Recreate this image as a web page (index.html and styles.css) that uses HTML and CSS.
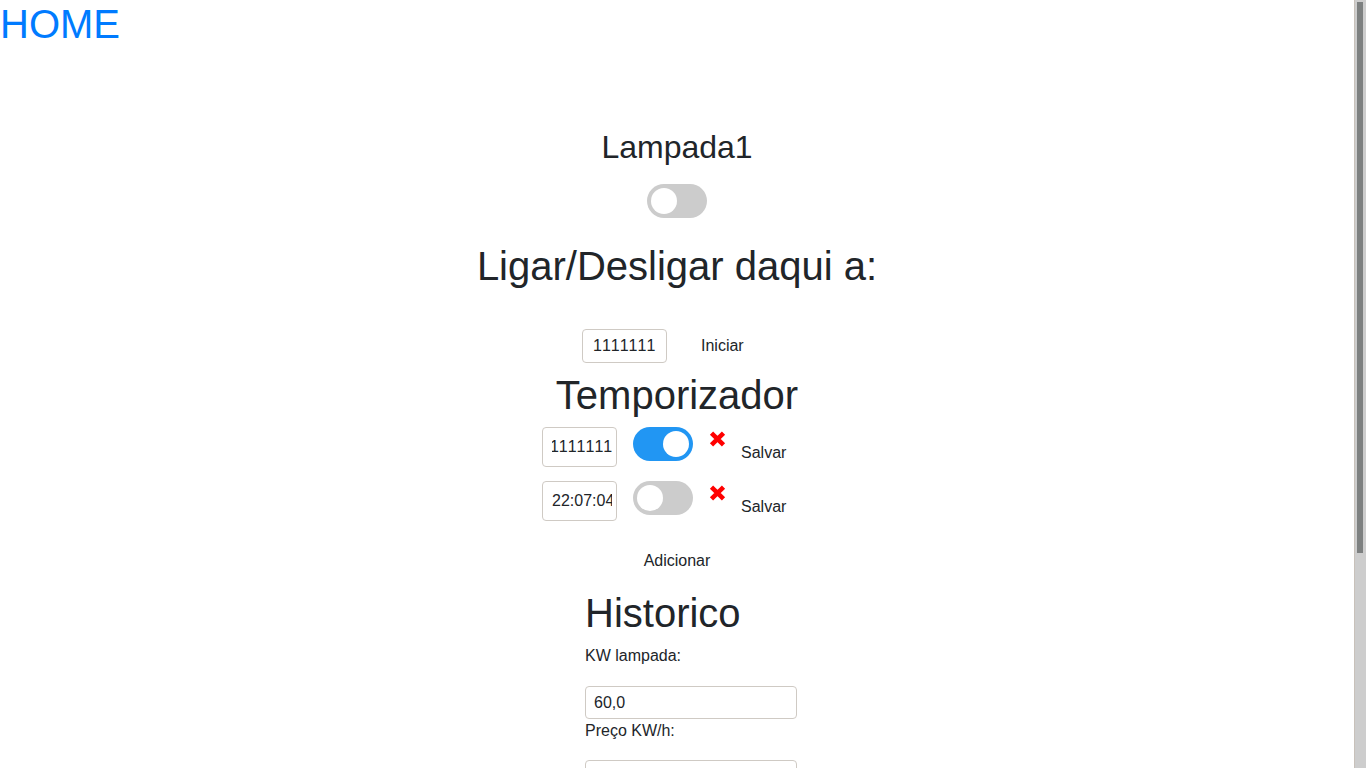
FILE: index.html
```html
<!DOCTYPE html>
<html lang="pt">
<head>
<meta charset="utf-8">
<title>Lampada1</title>
<link rel="stylesheet" href="styles.css">
</head>
<body>
<a class="home" href="#">HOME</a>
<main class="page">
  <h2 class="device-name">Lampada1</h2>
  <div class="main-switch">
    <label class="switch"><input type="checkbox"><span class="slider"></span></label>
  </div>
  <h1 class="title title-ligar">Ligar/Desligar daqui a:</h1>
  <div class="countdown-row">
    <input class="field field-count" type="text" value="1111111">
    <button class="link-btn start-btn" type="button">Iniciar</button>
  </div>
  <h1 class="title title-timer">Temporizador</h1>
  <div class="timer-list">
    <div class="timer-row">
      <input class="field field-time scroll-end" type="text" value="11111111">
      <label class="switch switch-timer"><input type="checkbox" checked><span class="slider"></span></label>
      <svg class="remove-icon" width="17" height="16" viewBox="0 0 17 16" aria-hidden="true">
        <path d="M2.5 2.2 L14.5 13.8 M14.5 2.2 L2.5 13.8" stroke="#ff0000" stroke-width="4.6" stroke-linecap="butt" fill="none"/>
      </svg>
      <button class="link-btn save-btn" type="button">Salvar</button>
    </div>
    <div class="timer-row">
      <input class="field field-time" type="text" value="22:07:04">
      <label class="switch switch-timer"><input type="checkbox"><span class="slider"></span></label>
      <svg class="remove-icon" width="17" height="16" viewBox="0 0 17 16" aria-hidden="true">
        <path d="M2.5 2.2 L14.5 13.8 M14.5 2.2 L2.5 13.8" stroke="#ff0000" stroke-width="4.6" stroke-linecap="butt" fill="none"/>
      </svg>
      <button class="link-btn save-btn" type="button">Salvar</button>
    </div>
  </div>
  <div class="add-row">
    <button class="link-btn add-btn" type="button">Adicionar</button>
  </div>
  <section class="history">
    <h1 class="title history-title">Historico</h1>
    <label class="field-label label-first" for="kw">KW lampada:</label>
    <input class="field field-wide field-kw" id="kw" type="text" value="60,0">
    <label class="field-label" for="preco">Preço KW/h:</label>
    <input class="field field-wide field-preco" id="preco" type="text" value="">
  </section>
</main>
<script src="script.js"></script>
</body>
</html>
```

FILE: styles.css
```css
html, body {
  margin: 0;
  padding: 0;
}

/* page canvas, with the scrollbar strip of the original window */
html {
  background-color: #ffffff;
  background-image:
    linear-gradient(#7d8080, #7d8080),
    linear-gradient(#c8c1ba, #c8c1ba),
    linear-gradient(#cdcdcd, #cdcdcd);
  background-size: 6px 551px, 1px 100%, 12px 100%;
  background-position: right 3px top 2px, right 11px top 0, right 0 top 0;
  background-repeat: no-repeat;
  background-attachment: fixed;
}

body {
  margin-right: 12px;
  font-family: "Liberation Sans", Arial, sans-serif;
  font-size: 16px;
  color: #212529;
}

.home {
  display: block;
  height: 48px;
  font-size: 40px;
  line-height: 48px;
  color: #007bff;
  text-decoration: none;
}

.page {
  text-align: center;
}

.device-name {
  margin: 80px 0 0;
  font-size: 32px;
  line-height: 38px;
  font-weight: 400;
}

.main-switch {
  margin-top: 18px;
  display: flex;
  justify-content: center;
}

.title {
  margin: 0;
  font-size: 40px;
  line-height: 48px;
  font-weight: 400;
}

.title-ligar {
  margin-top: 24px;
}

.title-timer {
  margin-top: 8px;
}

/* toggle switch */
.switch {
  position: relative;
  display: block;
  width: 60px;
  height: 34px;
  flex: none;
}

.switch input {
  opacity: 0;
  width: 0;
  height: 0;
  margin: 0;
}

.slider {
  position: absolute;
  inset: 0;
  background: #cccccc;
  border-radius: 34px;
  cursor: pointer;
}

.slider::before {
  content: "";
  position: absolute;
  left: 4px;
  bottom: 4px;
  width: 26px;
  height: 26px;
  border-radius: 50%;
  background: #ffffff;
}

.switch input:checked + .slider {
  background: #2196f3;
}

.switch input:checked + .slider::before {
  transform: translateX(26px);
}

/* inputs */
.field {
  box-sizing: border-box;
  font-family: "Liberation Sans", Arial, sans-serif;
  font-size: 16px;
  font-kerning: none;
  color: #212529;
  background: #ffffff;
  border: 1px solid #cfcac4;
  border-radius: 4px;
  outline: none;
  margin: 0;
}

.link-btn {
  background: none;
  border: 0;
  padding: 0;
  margin: 0;
  font-family: "Liberation Sans", Arial, sans-serif;
  font-size: 16px;
  line-height: 18px;
  color: #212529;
  cursor: pointer;
}

.countdown-row {
  width: 190px;
  height: 34px;
  margin: 39px auto 0;
  display: flex;
  align-items: center;
}

.field-count {
  width: 85px;
  height: 34px;
  padding: 0 10px;
}

.start-btn {
  margin-left: 34px;
}

.timer-list {
  margin-top: 8px;
  display: flex;
  flex-direction: column;
  gap: 14px;
}

.timer-row {
  width: 270px;
  height: 40px;
  margin: 0 auto;
  display: flex;
  align-items: flex-start;
}

.field-time {
  width: 75px;
  height: 40px;
  padding: 0 4px 0 9px;
  flex: none;
}

.switch-timer {
  margin-left: 16px;
}

.remove-icon {
  display: block;
  margin-left: 16px;
  margin-top: 4px;
  flex: none;
}

.save-btn {
  margin-left: 15px;
  margin-top: 17px;
}

.add-row {
  margin-top: 31px;
}

.history {
  width: 184px;
  margin: 19px auto 0;
  padding-bottom: 272px;
  text-align: left;
}

.field-label {
  display: block;
  line-height: 24px;
}

.label-first {
  margin-top: 7px;
}

.field-wide {
  display: block;
  width: 212px;
  height: 33px;
  padding: 0 8px;
}

.field-kw {
  margin-top: 18px;
}

.field-preco {
  margin-top: 17px;
}
```

FILE: script.js
```js
document.querySelectorAll('.scroll-end').forEach(function (el) {
  el.scrollLeft = el.scrollWidth;
});
```
